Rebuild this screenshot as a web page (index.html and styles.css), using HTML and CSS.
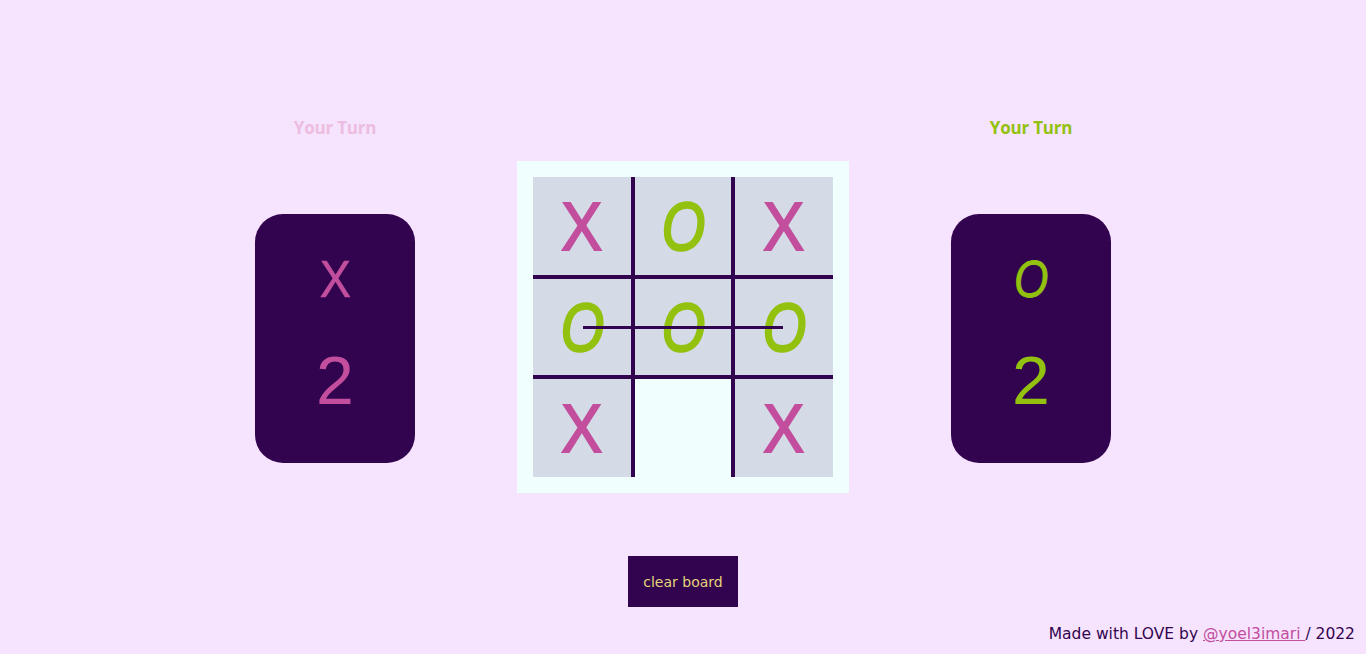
FILE: index.html
```html
<!DOCTYPE html>
<html lang="en">
<head>
<meta charset="utf-8">
<title>Tic Tac Toe</title>
<link rel="stylesheet" href="styles.css">
</head>
<body>
<main class="game">
  <section class="player">
    <h2 class="turn turn-x">Your Turn</h2>
    <div class="card">
      <span class="card-mark mark-x">X</span>
      <span class="card-score score-x">2</span>
    </div>
  </section>

  <section class="board">
    <div class="grid">
      <div class="cell c1"><span class="x">X</span></div>
      <div class="cell c2"><span class="o">O</span></div>
      <div class="cell c3"><span class="x">X</span></div>
      <div class="cell c4"><span class="o">O</span></div>
      <div class="cell c5"><span class="o">O</span></div>
      <div class="cell c6"><span class="o">O</span></div>
      <div class="cell c7"><span class="x">X</span></div>
      <div class="cell c8 empty"></div>
      <div class="cell c9"><span class="x">X</span></div>
      <div class="strike"></div>
    </div>
  </section>

  <section class="player">
    <h2 class="turn turn-o">Your Turn</h2>
    <div class="card">
      <span class="card-mark mark-o">O</span>
      <span class="card-score score-o">2</span>
    </div>
  </section>
</main>

<div class="actions">
  <button class="clear">clear board</button>
</div>

<footer class="footer">
  Made with LOVE by <a href="#" class="author">@yoel3imari </a> / 2022
</footer>
</body>
</html>
```

FILE: styles.css
```css
* { box-sizing: border-box; }

html, body {
  margin: 0;
  padding: 0;
}

body {
  background: #f6e3fd;
  width: 1366px;
  height: 654px;
  overflow: hidden;
  font-family: "Liberation Sans", Arial, sans-serif;
}

.game {
  display: flex;
  justify-content: center;
  align-items: flex-start;
  gap: 102px;
  padding-top: 117px;
}

.player {
  width: 160px;
  display: flex;
  flex-direction: column;
  align-items: center;
}

.turn {
  margin: 0 0 75px;
  font-family: "Open Sans", Lato, "Liberation Sans", sans-serif;
  font-weight: 700;
  font-size: 17px;
  line-height: 22px;
  letter-spacing: -0.2px;
}

.turn-x { color: #ecbde0; }
.turn-o { color: #93c10f; }

.card {
  width: 160px;
  height: 249px;
  background: #32044f;
  border-radius: 28px;
  display: flex;
  flex-direction: column;
  align-items: center;
  padding-top: 39px;
}

.card-mark {
  font-size: 52px;
  line-height: 52px;
  height: 52px;
  display: block;
}

.mark-x {
  color: #c24e9d;
  font-weight: 400;
  transform: scaleX(0.9);
  -webkit-text-stroke: 0.6px currentColor;
}

.mark-o {
  color: #93c10f;
  font-style: italic;
  font-weight: 400;
  transform: scaleX(0.85);
  -webkit-text-stroke: 0.8px currentColor;
}

.card-score {
  margin-top: 41px;
  font-size: 68px;
  line-height: 68px;
  display: block;
  font-weight: 400;
}

.score-x { color: #c24e9d; }
.score-o { color: #93c10f; }

.board {
  margin-top: 44px;
  width: 332px;
  height: 332px;
  padding: 16px;
  background: #f0fffe;
}

.grid {
  position: relative;
  display: grid;
  grid-template-columns: repeat(3, 100px);
  grid-template-rows: repeat(3, 100px);
}

.cell {
  background: #d4dae6;
  border: 0 solid #32044f;
  display: flex;
  align-items: center;
  justify-content: center;
}

.cell.empty { background: #f0fffe; }

.c1 { border-right-width: 2px; border-bottom-width: 2px; }
.c2 { border-left-width: 2px; border-right-width: 2px; border-bottom-width: 2px; }
.c3 { border-left-width: 2px; border-bottom-width: 2px; }
.c4 { border-top-width: 2px; border-right-width: 2px; border-bottom-width: 2px; }
.c5 { border-width: 2px; }
.c6 { border-top-width: 2px; border-left-width: 2px; border-bottom-width: 2px; }
.c7 { border-top-width: 2px; border-right-width: 2px; }
.c8 { border-top-width: 2px; border-left-width: 2px; border-right-width: 2px; }
.c9 { border-top-width: 2px; border-left-width: 2px; }

.x, .o {
  font-size: 68px;
  line-height: 68px;
  display: block;
}

.x {
  color: #c24e9d;
  font-weight: 400;
  transform: scaleX(0.9);
  -webkit-text-stroke: 2px currentColor;
}

.o {
  color: #93c10f;
  font-style: italic;
  font-weight: 400;
  transform: scaleX(0.82);
  -webkit-text-stroke: 2.4px currentColor;
}

.strike {
  position: absolute;
  left: 50px;
  top: 148.5px;
  width: 200px;
  height: 3px;
  background: #32044f;
}

.actions {
  display: flex;
  justify-content: center;
  margin-top: 63px;
}

.clear {
  width: 110px;
  height: 51px;
  border: 0;
  background: #32044f;
  color: #e6d47a;
  font-family: "DejaVu Sans", sans-serif;
  font-size: 14px;
  padding: 0;
}

.footer {
  position: absolute;
  right: 11px;
  bottom: 11px;
  color: #32044f;
  font-family: "Comic Sans MS", "DejaVu Sans", sans-serif;
  font-size: 15.5px;
  line-height: 18px;
}

.author {
  color: #c24e9d;
  text-decoration: underline;
}
```
